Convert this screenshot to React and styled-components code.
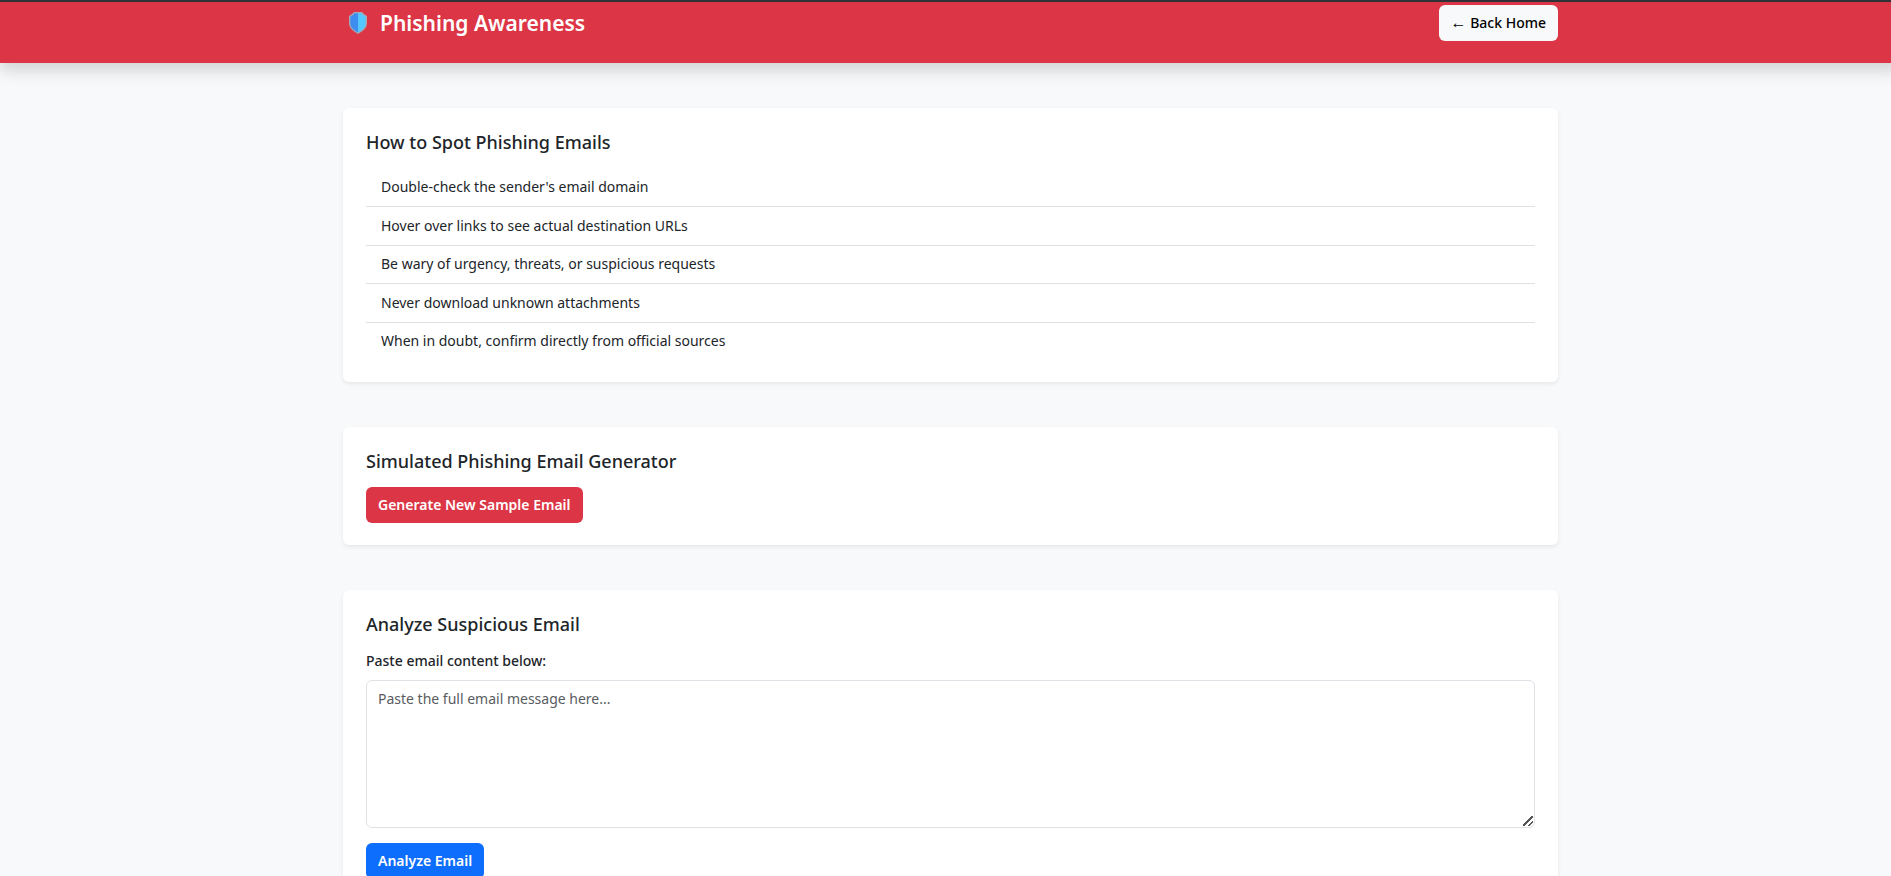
import React, { useState } from "react";
import styled, { createGlobalStyle } from "styled-components";

const GlobalStyle = createGlobalStyle`
  *, *::before, *::after { box-sizing: border-box; }
  html { overflow-x: hidden; }
  body {
    margin: 0;
    background: #f8f9fa;
    color: #212529;
    font-family: "Segoe UI", "Noto Sans", "Liberation Sans", sans-serif;
    font-size: 14px;
    line-height: 22px;
  }
`;

const Page = styled.div`
  width: calc(100% + 10px);
`;

const Container = styled.div`
  width: 100%;
  max-width: 1215px;
  margin: 0 auto;
`;

const Header = styled.header`
  border-top: 2px solid #2f3136;
  background: #dc3545;
  box-shadow: 0 8px 15px rgba(0, 0, 0, 0.15);
  padding: 3px 0 22px;
`;

const HeaderRow = styled(Container)`
  display: flex;
  align-items: center;
  justify-content: space-between;
`;

const Brand = styled.h1`
  display: flex;
  align-items: center;
  gap: 13px;
  margin: 0;
  padding-left: 6px;
  color: #fff;
  font-size: 21px;
  font-weight: 600;
  line-height: 35px;
`;

const palettes = {
  light: { background: "#f8f9fa", color: "#000" },
  danger: { background: "#dc3545", color: "#fff" },
  primary: { background: "#0d6efd", color: "#fff" },
};

const Button = styled.button`
  display: inline-block;
  border: 0;
  border-radius: 6px;
  padding: 7px 12px;
  background: ${(p) => palettes[p.$variant].background};
  color: ${(p) => palettes[p.$variant].color};
  font-family: inherit;
  font-size: 14px;
  font-weight: ${(p) => (p.$variant === "light" ? 500 : 600)};
  line-height: 22px;
  vertical-align: top;
  text-decoration: none;
  cursor: pointer;
`;

const Arrow = styled.span`
  font-family: "Liberation Sans", sans-serif;
  font-size: 16px;
  line-height: 1;
`;

const Main = styled(Container).attrs({ as: "main" })`
  display: flex;
  flex-direction: column;
  gap: 45px;
  padding: 45px 0;
`;

const Card = styled.section`
  border-radius: 6px;
  padding: 23px 23px 22px;
  background: #fff;
  box-shadow: 0 2px 4px rgba(0, 0, 0, 0.075);
`;

const CardTitle = styled.h2`
  margin: 0 0 15px;
  font-size: 18px;
  font-weight: 500;
  line-height: 22px;
`;

const TipList = styled.ul`
  display: grid;
  grid-auto-rows: 1fr;
  min-height: 192px;
  margin: 0;
  padding: 0;
  list-style: none;
`;

const Tip = styled.li`
  display: flex;
  align-items: center;
  padding: 0 15px;
  & + & { border-top: 1px solid #dee2e6; }
`;

const Label = styled.label`
  display: block;
  margin-bottom: 8px;
  font-weight: 500;
`;

const TextArea = styled.textarea`
  display: block;
  width: 100%;
  height: 148px;
  margin-bottom: 15px;
  border: 1px solid #dee2e6;
  border-radius: 6px;
  padding: 7px 11px;
  background: #fff;
  color: #212529;
  font: inherit;
  resize: vertical;
  &::placeholder { color: #595c5f; opacity: 1; }
  &::-webkit-resizer {
    background: linear-gradient(
      135deg,
      transparent 6px, #555 6px, #555 8px,
      transparent 8px, transparent 10px,
      #555 10px, #555 12px, transparent 12px
    ) 4px 4px / 10px 10px no-repeat;
  }
`;

const tips = [
  "Double-check the sender's email domain",
  "Hover over links to see actual destination URLs",
  "Be wary of urgency, threats, or suspicious requests",
  "Never download unknown attachments",
  "When in doubt, confirm directly from official sources",
];

function Shield() {
  return (
    <svg width="18" height="22" viewBox="0 0 18 22" aria-hidden="true">
      <path d="M5 0h8l2 2 3 2v7c0 5-4 8-9 11C4 19 0 16 0 11V4l3-2z" fill="#a4a9b5" />
      <path d="M9 1.3H5.6L4 3 1.3 4.7V11c0 4.2 3 6.9 7.7 9.6z" fill="#3d8eee" />
      <path d="M9 1.3h3.4L14 3l2.7 1.7V11c0 4.2-3 6.9-7.7 9.6z" fill="#55c8ff" />
    </svg>
  );
}

export default function App() {
  const [message, setMessage] = useState("");
  return (
    <Page>
      <GlobalStyle />
      <Header>
        <HeaderRow>
          <Brand>
            <Shield />
            Phishing Awareness
          </Brand>
          <Button as="a" href="#home" $variant="light"><Arrow>←</Arrow> Back Home</Button>
        </HeaderRow>
      </Header>
      <Main>
        <Card>
          <CardTitle>How to Spot Phishing Emails</CardTitle>
          <TipList>
            {tips.map((tip) => <Tip key={tip}>{tip}</Tip>)}
          </TipList>
        </Card>
        <Card>
          <CardTitle>Simulated Phishing Email Generator</CardTitle>
          <Button type="button" $variant="danger">Generate New Sample Email</Button>
        </Card>
        <Card>
          <CardTitle>Analyze Suspicious Email</CardTitle>
          <Label htmlFor="message">Paste email content below:</Label>
          <TextArea
            id="message"
            placeholder="Paste the full email message here..."
            value={message}
            onChange={(e) => setMessage(e.target.value)}
          />
          <Button type="button" $variant="primary">Analyze Email</Button>
        </Card>
      </Main>
    </Page>
  );
}
